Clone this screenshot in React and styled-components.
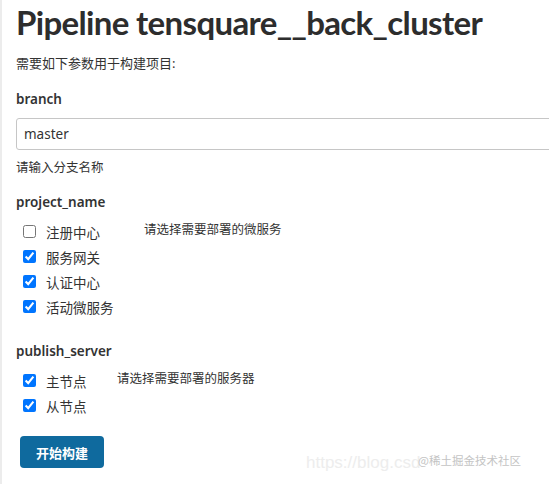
import styled, { createGlobalStyle } from "styled-components";

const GlobalStyle = createGlobalStyle`
  html, body {
    margin: 0;
    padding: 0;
    background: #ffffff;
  }
  body {
    font-family: "Noto Sans", "Noto Sans CJK SC", sans-serif;
    color: #333333;
    overflow: hidden;
  }
`;

const Page = styled.div`
  position: relative;
  width: 549px;
  height: 484px;
  box-sizing: border-box;
  border-left: 2px solid #ececec;
  padding: 0 0 0 14px;
  overflow: hidden;
`;

const Title = styled.h1`
  margin: 0;
  padding-top: 1px;
  font-family: "Lato", "Noto Sans", sans-serif;
  font-size: 33px;
  line-height: 42px;
  font-weight: 700;
  letter-spacing: -0.65px;
  color: #2d2d2d;
  white-space: nowrap;
`;

const Intro = styled.p`
  margin: 10px 0 0;
  font-size: 13px;
  line-height: 20px;
  color: #333;
`;

const Param = styled.section`
  margin-top: ${(p) => p.top}px;
`;

const ParamName = styled.div`
  font-size: 13.5px;
  font-weight: 600;
  line-height: 20px;
  color: #333;
`;

const TextField = styled.input`
  display: block;
  box-sizing: border-box;
  width: 560px;
  height: 32px;
  margin-top: 9px;
  padding: 0 7px;
  border: 1px solid #c6c6c6;
  border-radius: 3px;
  font-family: inherit;
  font-size: 13.5px;
  color: #333;
  outline: none;
`;

const Hint = styled.div`
  margin-top: 8px;
  font-size: 12.5px;
  line-height: 20px;
  color: #333;
`;

const ChoiceRow = styled.div`
  display: flex;
  align-items: flex-start;
  margin-top: ${(p) => p.gap}px;
`;

const ChoiceList = styled.div`
  display: flex;
  flex-direction: column;
  width: ${(p) => p.width}px;
  padding-left: 7px;
`;

const Choice = styled.label`
  display: flex;
  align-items: center;
  height: 25px;
  font-size: 13.5px;
  color: #333;
`;

const Box = styled.input`
  width: 13px;
  height: 13px;
  margin: 0 10px 0 0;
  accent-color: #0075ff;
`;

const ChoiceHint = styled.div`
  padding-top: 1px;
  font-size: 12.5px;
  line-height: 20px;
  color: #333;
`;

const BuildButton = styled.button`
  margin: 18px 0 0 4px;
  width: 84px;
  height: 32px;
  border: none;
  border-radius: 4px;
  background: #0f6a9e;
  color: #ffffff;
  font-family: inherit;
  font-size: 13px;
  font-weight: 700;
  cursor: pointer;
`;

const Watermark = styled.div`
  position: absolute;
  left: ${(p) => p.left}px;
  bottom: ${(p) => p.bottom}px;
  font-family: ${(p) => (p.latin ? '"Liberation Sans"' : '"Noto Sans CJK SC"')}, sans-serif;
  font-size: ${(p) => p.size}px;
  line-height: 1.2;
  color: ${(p) => p.color};
  white-space: nowrap;
  pointer-events: none;
`;

function Choices({ items, hint, width, gap }) {
  return (
    <ChoiceRow gap={gap}>
      <ChoiceList width={width}>
        {items.map((it) => (
          <Choice key={it.label}>
            <Box type="checkbox" defaultChecked={it.checked} />
            {it.label}
          </Choice>
        ))}
      </ChoiceList>
      <ChoiceHint>{hint}</ChoiceHint>
    </ChoiceRow>
  );
}

export default function App() {
  return (
    <Page>
      <GlobalStyle />
      <Title>Pipeline tensquare__back_cluster</Title>
      <Intro>需要如下参数用于构建项目:</Intro>

      <Param top={16}>
        <ParamName>branch</ParamName>
        <TextField type="text" defaultValue="master" />
        <Hint>请输入分支名称</Hint>
      </Param>

      <Param top={14}>
        <ParamName>project_name</ParamName>
        <Choices
          gap={7}
          width={121}
          hint="请选择需要部署的微服务"
          items={[
            { label: "注册中心", checked: false },
            { label: "服务网关", checked: true },
            { label: "认证中心", checked: true },
            { label: "活动微服务", checked: true },
          ]}
        />
      </Param>

      <Param top={22}>
        <ParamName>publish_server</ParamName>
        <Choices
          gap={7}
          width={94}
          hint="请选择需要部署的服务器"
          items={[
            { label: "主节点", checked: true },
            { label: "从节点", checked: true },
          ]}
        />
      </Param>

      <BuildButton type="button">开始构建</BuildButton>

      <Watermark left={304} bottom={11} size={17} color="#ededed" latin>
        https://blog.csd
      </Watermark>
      <Watermark left={416} bottom={16} size={11.5} color="#c4c4c4">
        @稀土掘金技术社区
      </Watermark>
    </Page>
  );
}
